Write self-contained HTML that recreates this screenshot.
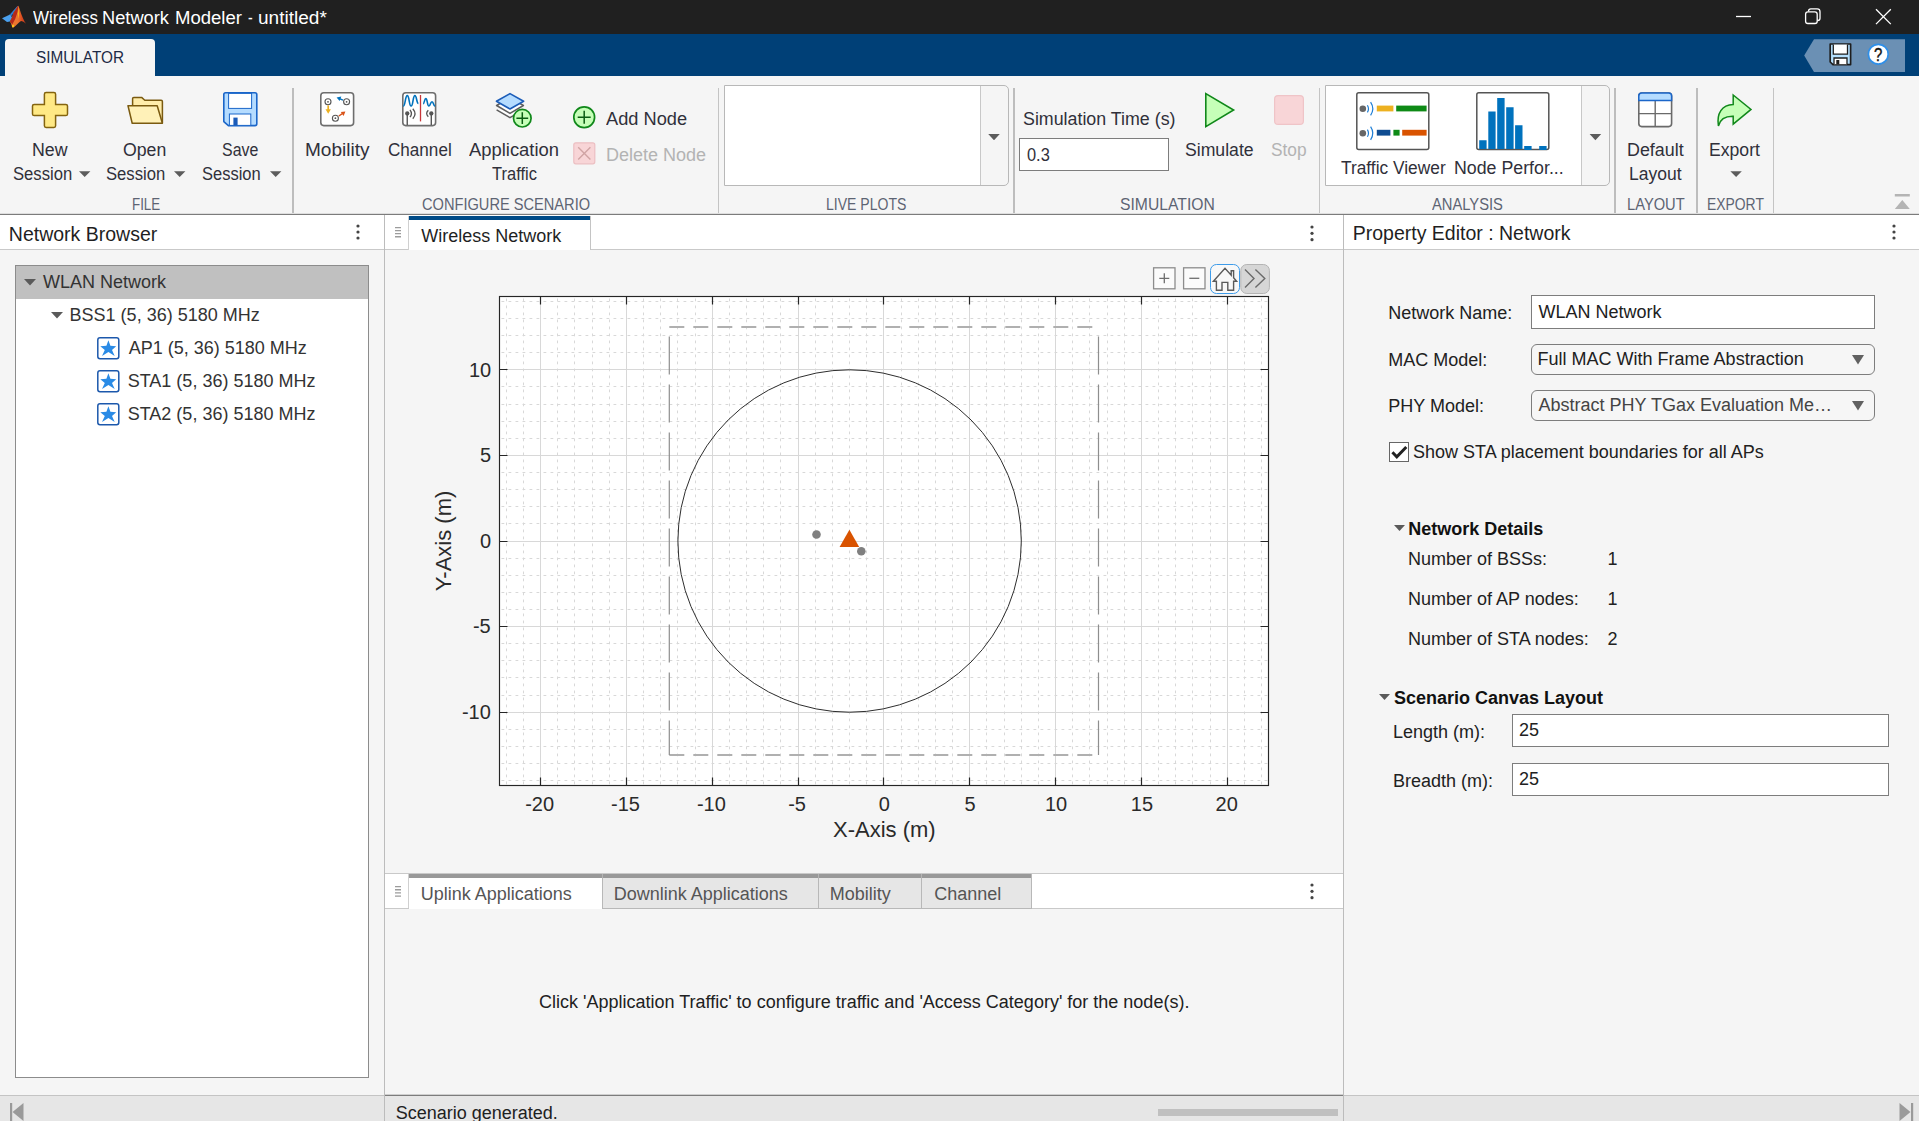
<!DOCTYPE html>
<html lang="en">
<head>
<meta charset="utf-8">
<title>Wireless Network Modeler - untitled*</title>
<style>
html,body{margin:0;padding:0;}
body{width:1919px;height:1121px;overflow:hidden;background:#f5f5f5;font-family:"Liberation Sans",sans-serif;position:relative;color:#212121;}
.a{position:absolute;}
.t{position:absolute;white-space:nowrap;line-height:normal;}
.ts{color:#1f1f2e;}
.sec{color:#5f6675;}
.dis{color:#b4b4b4;}
svg{position:absolute;overflow:visible;}
</style>
</head>
<body>
<!-- title bar -->
<div class="a" style="left:0;top:0;width:1919px;height:34px;background:#202020;"></div>
<!-- blue band -->
<div class="a" style="left:0;top:34px;width:1919px;height:42px;background:#004077;"></div>
<!-- simulator tab -->
<div class="a" style="left:5px;top:39px;width:150px;height:37px;background:#f5f5f5;border-radius:4px 4px 0 0;"></div>
<!-- toolstrip bottom border -->
<div class="a" style="left:0;top:213px;width:1919px;height:1px;background:#dedede;"></div><div class="a" style="left:0;top:214px;width:1919px;height:1px;background:#7c7c7c;"></div>
<!-- section separators -->
<div class="a" style="left:292px;top:88px;width:2px;height:125px;background:#bdbdbd;"></div>
<div class="a" style="left:718px;top:88px;width:1px;height:125px;background:#c4c4c4;"></div>
<div class="a" style="left:1013px;top:88px;width:2px;height:125px;background:#bdbdbd;"></div>
<div class="a" style="left:1319px;top:88px;width:1px;height:125px;background:#c4c4c4;"></div>
<div class="a" style="left:1614px;top:88px;width:2px;height:125px;background:#bdbdbd;"></div>
<div class="a" style="left:1696px;top:88px;width:2px;height:125px;background:#bdbdbd;"></div>
<div class="a" style="left:1773px;top:88px;width:1px;height:125px;background:#c4c4c4;"></div>
<!-- galleries -->
<div class="a" style="left:724px;top:85px;width:285px;height:101px;box-sizing:border-box;border:1px solid #b8b8b8;border-radius:0 5px 5px 0;background:#f5f5f5;"></div>
<div class="a" style="left:725px;top:86px;width:255px;height:99px;background:#fff;border-right:1px solid #c8c8c8;"></div>
<div class="a" style="left:1325px;top:85px;width:285px;height:101px;box-sizing:border-box;border:1px solid #b8b8b8;border-radius:0 5px 5px 0;background:#f5f5f5;"></div>
<div class="a" style="left:1326px;top:86px;width:255px;height:99px;background:#fff;border-right:1px solid #c8c8c8;"></div>
<!-- sim time input -->
<div class="a" style="left:1019px;top:138px;width:150px;height:33px;box-sizing:border-box;border:1px solid #7d7d7d;background:#fff;"></div>
<!-- panel headers (white) -->
<div class="a" style="left:0;top:215px;width:384px;height:34px;background:#fff;border-bottom:1px solid #c9c9c9;"></div>
<div class="a" style="left:385px;top:215px;width:958px;height:34px;background:#fff;border-bottom:1px solid #c9c9c9;"></div>
<div class="a" style="left:1344px;top:215px;width:575px;height:34px;background:#fff;border-bottom:1px solid #c9c9c9;"></div>
<!-- vertical separators -->
<div class="a" style="left:384px;top:215px;width:1px;height:906px;background:#bcbcbc;"></div>
<div class="a" style="left:1343px;top:215px;width:1px;height:906px;background:#bcbcbc;"></div>
<!-- wireless network tab -->
<div class="a" style="left:408px;top:216px;width:183px;height:34px;box-sizing:border-box;background:#fff;border-left:1px solid #d0d0d0;border-right:1px solid #c4c4c4;"></div>
<div class="a" style="left:409px;top:216px;width:181px;height:4px;background:#004b87;"></div>
<!-- grips -->
<svg style="left:395px;top:227px" width="7" height="12"><path d="M0 0H6V1.3H0ZM0 3H6V4.3H0ZM0 6H6V7.3H0ZM0 9.1H6V10.400H0Z" fill="#9c9c9c"/></svg>
<!-- kebabs -->
<svg style="left:355px;top:223px" width="6" height="18"><circle cx="3" cy="3" r="1.6" fill="#444"/><circle cx="3" cy="9" r="1.6" fill="#444"/><circle cx="3" cy="15" r="1.6" fill="#444"/></svg>
<svg style="left:1309px;top:224px" width="6" height="18"><circle cx="3" cy="3" r="1.6" fill="#444"/><circle cx="3" cy="9.3" r="1.6" fill="#444"/><circle cx="3" cy="15.7" r="1.6" fill="#444"/></svg>
<svg style="left:1891px;top:223px" width="6" height="18"><circle cx="3" cy="3" r="1.6" fill="#444"/><circle cx="3" cy="9" r="1.6" fill="#444"/><circle cx="3" cy="15" r="1.6" fill="#444"/></svg>
<!-- tree box -->
<div class="a" style="left:15px;top:265px;width:354px;height:813px;box-sizing:border-box;border:1px solid #8c8c8c;background:#fff;"></div>
<div class="a" style="left:16px;top:266px;width:352px;height:33px;background:#c0c0c0;"></div>
<svg style="left:24px;top:279px" width="12" height="7"><path d="M0 0H12L6 6.5Z" fill="#5a5a5a"/></svg>
<svg style="left:51px;top:312px" width="12" height="7"><path d="M0 0H12L6 6.5Z" fill="#5a5a5a"/></svg>
<!-- lower tab bar -->
<div class="a" style="left:385px;top:873px;width:958px;height:1px;background:#c9c9c9;"></div>
<div class="a" style="left:385px;top:874px;width:958px;height:34px;background:#fff;border-bottom:1px solid #c9c9c9;"></div>
<div class="a" style="left:408px;top:874px;width:1px;height:34px;background:#d0d0d0;"></div>
<div class="a" style="left:409px;top:874px;width:193px;height:35px;background:#fff;"></div>
<div class="a" style="left:602px;top:874px;width:430px;height:35px;box-sizing:border-box;background:#e6e6e6;border-bottom:1px solid #b8b8b8;border-right:1px solid #b8b8b8;"></div>
<div class="a" style="left:602px;top:874px;width:1px;height:34px;background:#b8b8b8;"></div>
<div class="a" style="left:818px;top:874px;width:1px;height:34px;background:#b8b8b8;"></div>
<div class="a" style="left:921px;top:874px;width:1px;height:34px;background:#b8b8b8;"></div>
<div class="a" style="left:409px;top:874px;width:622px;height:4px;background:#999;"></div>
<div class="a" style="left:602px;top:874px;width:1px;height:4px;background:#b4b4b4;"></div><div class="a" style="left:818px;top:874px;width:1px;height:4px;background:#b4b4b4;"></div><div class="a" style="left:921px;top:874px;width:1px;height:4px;background:#b4b4b4;"></div>
<svg style="left:395px;top:886px" width="7" height="12"><path d="M0 0H6V1.3H0ZM0 3.1H6V4.400H0ZM0 6.3H6V7.600H0ZM0 9.5H6V10.800H0Z" fill="#9c9c9c"/></svg>
<svg style="left:1309px;top:882px" width="6" height="18"><circle cx="3" cy="3" r="1.6" fill="#444"/><circle cx="3" cy="9.3" r="1.6" fill="#444"/><circle cx="3" cy="15.7" r="1.6" fill="#444"/></svg>
<!-- status bar -->
<div class="a" style="left:0;top:1095px;width:1919px;height:26px;background:#e6e6e6;"></div>
<div class="a" style="left:0;top:1095px;width:384px;height:1px;background:#c4c4c4;"></div>
<div class="a" style="left:385px;top:1094px;width:958px;height:1px;background:#cfcfcf;"></div><div class="a" style="left:385px;top:1095px;width:958px;height:1px;background:#7c7c7c;"></div>
<div class="a" style="left:1344px;top:1095px;width:575px;height:1px;background:#c4c4c4;"></div>
<div class="a" style="left:384px;top:1095px;width:1px;height:26px;background:#bcbcbc;"></div>
<div class="a" style="left:1343px;top:1095px;width:1px;height:26px;background:#bcbcbc;"></div>
<div class="a" style="left:1158px;top:1109px;width:180px;height:7px;background:#c0c0c0;"></div>
<svg style="left:10px;top:1103px" width="14" height="18"><rect x="0" y="0" width="2.2" height="18" fill="#9a9a9a"/><path d="M13.5 0V18L2.5 9Z" fill="#9a9a9a"/></svg>
<svg style="left:1899px;top:1103px" width="15" height="18"><rect x="12" y="0" width="2.2" height="18" fill="#9a9a9a"/><path d="M0.5 0V18L11.5 9Z" fill="#9a9a9a"/></svg>
<!-- property editor widgets -->
<div class="a" style="left:1531px;top:295px;width:344px;height:34px;box-sizing:border-box;border:1px solid #7d7d7d;background:#fff;"></div>
<div class="a" style="left:1531px;top:344px;width:344px;height:31px;box-sizing:border-box;border:1px solid #7d7d7d;border-radius:6px;background:#f6f6f6;"></div>
<div class="a" style="left:1531px;top:390px;width:344px;height:31px;box-sizing:border-box;border:1px solid #7d7d7d;border-radius:6px;background:#f6f6f6;"></div>
<svg style="left:1852px;top:355px" width="12" height="10"><path d="M0 0H12L6 9.5Z" fill="#616161"/></svg>
<svg style="left:1852px;top:401px" width="12" height="10"><path d="M0 0H12L6 9.5Z" fill="#616161"/></svg>
<div class="a" style="left:1389px;top:442px;width:20px;height:20px;box-sizing:border-box;border:1px solid #666;background:#fff;"></div>
<svg style="left:1389px;top:442px" width="20" height="20"><path d="M3.400 10.200L7.800 14.800L17.300 4.900" stroke="#222" stroke-width="2.900" fill="none"/></svg>
<svg style="left:1394px;top:525px" width="12" height="7"><path d="M0 0H11L5.5 6Z" fill="#5a5a5a"/></svg>
<svg style="left:1379px;top:694px" width="12" height="7"><path d="M0 0H11L5.5 6Z" fill="#5a5a5a"/></svg>
<div class="a" style="left:1512px;top:714px;width:377px;height:33px;box-sizing:border-box;border:1px solid #7d7d7d;background:#fff;"></div>
<div class="a" style="left:1512px;top:763px;width:377px;height:33px;box-sizing:border-box;border:1px solid #7d7d7d;background:#fff;"></div>
<svg style="left:0;top:0" width="1919" height="1121" viewBox="0 0 1919 1121">
<rect x="499.5" y="296.5" width="769.0" height="489.0" fill="#fff"/>
<path d="M506.5 296.5V785.5M523.5 296.5V785.5M557.5 296.5V785.5M574.5 296.5V785.5M592.5 296.5V785.5M609.5 296.5V785.5M643.5 296.5V785.5M660.5 296.5V785.5M677.5 296.5V785.5M695.5 296.5V785.5M729.5 296.5V785.5M746.5 296.5V785.5M763.5 296.5V785.5M780.5 296.5V785.5M815.5 296.5V785.5M832.5 296.5V785.5M849.5 296.5V785.5M866.5 296.5V785.5M901.5 296.5V785.5M918.5 296.5V785.5M935.5 296.5V785.5M952.5 296.5V785.5M986.5 296.5V785.5M1004.5 296.5V785.5M1021.5 296.5V785.5M1038.5 296.5V785.5M1072.5 296.5V785.5M1089.5 296.5V785.5M1107.5 296.5V785.5M1124.5 296.5V785.5M1158.5 296.5V785.5M1175.5 296.5V785.5M1192.5 296.5V785.5M1210.5 296.5V785.5M1244.5 296.5V785.5M1261.5 296.5V785.5" stroke="#d8d8d8" stroke-width="1" stroke-dasharray="2.8 4.2" stroke-dashoffset="-2" fill="none"/>
<path d="M499.5 780.5H1268.5M499.5 763.5H1268.5M499.5 746.5H1268.5M499.5 729.5H1268.5M499.5 695.5H1268.5M499.5 677.5H1268.5M499.5 660.5H1268.5M499.5 643.5H1268.5M499.5 609.5H1268.5M499.5 592.5H1268.5M499.5 575.5H1268.5M499.5 558.5H1268.5M499.5 523.5H1268.5M499.5 506.5H1268.5M499.5 489.5H1268.5M499.5 472.5H1268.5M499.5 438.5H1268.5M499.5 421.5H1268.5M499.5 404.5H1268.5M499.5 386.5H1268.5M499.5 352.5H1268.5M499.5 335.5H1268.5M499.5 318.5H1268.5M499.5 301.5H1268.5" stroke="#d8d8d8" stroke-width="1" stroke-dasharray="2.8 4.2" stroke-dashoffset="-2" fill="none"/>
<path d="M540.5 296.5V785.5M626.5 296.5V785.5M712.5 296.5V785.5M798.5 296.5V785.5M883.5 296.5V785.5M969.5 296.5V785.5M1055.5 296.5V785.5M1141.5 296.5V785.5M1227.5 296.5V785.5M499.5 712.5H1268.5M499.5 626.5H1268.5M499.5 541.5H1268.5M499.5 455.5H1268.5M499.5 369.5H1268.5" stroke="#d8d8d8" stroke-width="1" fill="none"/>
<path d="M669.3 327.0H1098.5M669.3 755.0H1098.5" stroke="#b0b0b0" stroke-width="1.8" stroke-dasharray="15 9" fill="none"/>
<path d="M669.3 336.4V755.0M1098.5 336.4V755.0" stroke="#8e8e8e" stroke-width="1.2" stroke-dasharray="38 10" fill="none"/>
<ellipse cx="849.6" cy="541.0" rx="171.7" ry="171.2" stroke="#2e2e2e" stroke-width="1" fill="none"/>
<circle cx="816.5" cy="534.5" r="4.3" fill="#808080"/>
<circle cx="861.3" cy="551.3" r="4.3" fill="#808080"/>
<path d="M849.4 529.8L859.2 547H839.6Z" fill="#d95300"/>
<path d="M540.5 296.5v8M540.5 785.5v-8M626.5 296.5v8M626.5 785.5v-8M712.5 296.5v8M712.5 785.5v-8M798.5 296.5v8M798.5 785.5v-8M883.5 296.5v8M883.5 785.5v-8M969.5 296.5v8M969.5 785.5v-8M1055.5 296.5v8M1055.5 785.5v-8M1141.5 296.5v8M1141.5 785.5v-8M1227.5 296.5v8M1227.5 785.5v-8M499.5 712.5h8M1268.5 712.5h-8M499.5 626.5h8M1268.5 626.5h-8M499.5 541.5h8M1268.5 541.5h-8M499.5 455.5h8M1268.5 455.5h-8M499.5 369.5h8M1268.5 369.5h-8" stroke="#262626" stroke-width="1.2" fill="none"/>
<rect x="499.5" y="296.5" width="769.0" height="489.0" fill="none" stroke="#262626" stroke-width="1.15"/>
</svg>
<!-- matlab logo -->
<svg style="left:0;top:0" width="30" height="34" viewBox="0 0 30 34">
<defs><linearGradient id="lg1" x1="0" y1="0" x2="1" y2="0"><stop offset="0" stop-color="#ee7a2c"/><stop offset="0.5" stop-color="#ec7430"/><stop offset="0.75" stop-color="#d9491f"/><stop offset="1" stop-color="#c03a1c"/></linearGradient></defs>
<path d="M2 18.3L8.5 15.2L10.2 14.3L12 17.6L9.9 21.4L7 21.9Z" fill="#4aa0ee"/>
<path d="M10 14.3L17.5 5.9L17.9 6.6L13.6 12.8L11.6 16Z" fill="#2f7cd6"/>
<path d="M12.7 28C12 26 11 23.5 10 21.6L12 17.6L13.8 12.6L17.8 6.2L18.4 5.8C19.6 8 21.6 17.5 26 23.7C24 22 22.5 21 21 21C18.5 22.500 15.500 26.500 12.700 28Z" fill="url(#lg1)"/>
<path d="M17.8 6.2L18.4 5.8L17.600 12L15.200 19L12.300 24.500L10 21.600L12 17.600L13.800 12.600Z" fill="#b3281b"/>
<path d="M18.400 6.800L19.100 13.500L18.700 19L17.700 13.500Z" fill="#f7b21e"/>
<circle cx="13" cy="26" r="1.200" fill="#fbc31a"/>
</svg>
<!-- window controls -->
<svg style="left:1730px;top:0" width="189" height="34" viewBox="1730 0 189 34">
<path d="M1736 16.5H1751" stroke="#fff" stroke-width="1.3" fill="none"/>
<path d="M1808.5 11.5V11A2.3 2.3 0 0 1 1810.8 8.9H1817.2A2.8 2.8 0 0 1 1820 11.7V18.2A2.3 2.3 0 0 1 1817.7 20.5H1817.3" stroke="#fff" stroke-width="1.3" fill="none"/>
<rect x="1805.6" y="11.9" width="11.6" height="11.6" rx="2.3" stroke="#fff" stroke-width="1.3" fill="none"/>
<path d="M1876 9.3L1890.8 24.1M1890.8 9.3L1876 24.1" stroke="#fff" stroke-width="1.3" fill="none"/>
</svg>
<!-- quick access -->
<svg style="left:1800px;top:34px" width="119" height="42" viewBox="1800 34 119 42">
<path d="M1804.2 55.6L1814 39.2H1905V72H1814Z" fill="#6b90b4"/>
<path d="M1830.2 44H1850.6V64.6H1833L1830.2 62Z" fill="#b4e0ff" stroke="#1e1e1e" stroke-width="1.700" stroke-linejoin="round"/>
<rect x="1833.3" y="44.6" width="14.2" height="9.6" fill="#fff"/>
<rect x="1834" y="58" width="13" height="6.2" fill="#fff"/>
<path d="M1833.3 44.6V54.2H1847.5V44.6M1834 64V58H1847V64" stroke="#1e1e1e" stroke-width="1.300" fill="none"/>
<rect x="1836.3" y="60" width="3" height="4.4" fill="#1e1e1e"/>
<circle cx="1878.3" cy="54.2" r="9.900" fill="#fff" stroke="#2f8fe8" stroke-width="1.700"/>
</svg>
<!-- New Session -->
<svg style="left:0;top:76px" width="300" height="140" viewBox="0 76 300 140">
<path d="M44.4 94.3Q44.4 92.6 46.1 92.6H53.9Q55.6 92.6 55.6 94.3V104.4H65.8Q67.5 104.4 67.5 106.1V113.9Q67.5 115.6 65.8 115.6H55.6V125.8Q55.6 127.5 53.9 127.5H46.1Q44.4 127.5 44.4 125.8V115.6H34.2Q32.5 115.6 32.5 113.9V106.1Q32.5 104.4 34.2 104.4H44.4Z" fill="#ffe985" stroke="#84640f" stroke-width="1.5"/>
<!-- Open folder -->
<path d="M132.6 106V98.6Q132.6 97.4 133.8 97.4H141.6L144.8 100.2H161.2Q162.4 100.2 162.4 101.4V123" fill="#ffedab" stroke="#7a5a10" stroke-width="1.5" stroke-linejoin="round"/>
<path d="M128 105.8H157.2L162.4 123.2H132.2Z" fill="#fff1b8" stroke="#7a5a10" stroke-width="1.5" stroke-linejoin="round"/>
<!-- Save -->
<path d="M225.6 92.8H255Q256.8 92.8 256.8 94.6V123.8Q256.8 125.6 255 125.6H228.4L223.8 121.6V94.6Q223.8 92.8 225.6 92.8Z" fill="#b5dcff" stroke="#1b66c9" stroke-width="1.6" stroke-linejoin="round"/>
<rect x="228.6" y="93.4" width="23" height="15" fill="#fff" stroke="#1b66c9" stroke-width="1"/>
<rect x="229.4" y="114" width="21.4" height="11.4" fill="#fff" stroke="#1b66c9" stroke-width="1"/>
<rect x="233.4" y="117.6" width="4.2" height="7.8" fill="#1b5bb8"/>
<!-- dropdown arrows -->
<path d="M79 171.2H90.4L84.7 177Z M174 171.2H185.4L179.7 177Z M270 171.2H281.4L275.7 177Z" fill="#5c5c5c"/>
</svg>
<svg style="left:300px;top:76px" width="420" height="140" viewBox="300 76 420 140">
<!-- Mobility -->
<rect x="320.8" y="92.8" width="32.8" height="32.8" rx="3" fill="#fff" stroke="#6e6e6e" stroke-width="1.6"/>
<g fill="#fff" stroke="#555" stroke-width="1.1"><circle cx="328" cy="101.8" r="3"/><circle cx="346.6" cy="101.8" r="3"/><circle cx="335.4" cy="118.2" r="3"/></g>
<g fill="#555"><circle cx="328" cy="101.8" r="0.9"/><circle cx="346.6" cy="101.8" r="0.9"/><circle cx="335.4" cy="118.2" r="0.9"/></g>
<path d="M328.200 105.400V110" stroke="#edb120" stroke-width="1.700" fill="none"/><path d="M325.500 109.300H330.900L328.200 113.700Z" fill="#edb120"/>
<path d="M343 100.2L339.5 98.6" stroke="#0072bd" stroke-width="1.4" fill="none"/><path d="M336.6 97.4L341.3 96.4L339.6 100.9Z" fill="#0072bd"/>
<path d="M338.8 116L342.4 113.6" stroke="#d95319" stroke-width="1.4" fill="none"/><path d="M345.4 111.5L343.6 116L340.8 111.9Z" fill="#d95319"/>
<!-- Channel -->
<rect x="402.8" y="92.8" width="32.8" height="32.8" rx="3" fill="#fff" stroke="#6e6e6e" stroke-width="1.6"/>
<path d="M420.5 95V121.4" stroke="#c8373a" stroke-width="1.3" fill="none"/>
<path d="M403.2 106.2C405.45 106.2 405.05 95.6 407.3 95.6C409.39 95.6 409.01 106 411.1 106C413.19 106 412.81 95.6 414.9 95.6C416.82 95.6 416.47 103.4 418.4 103.4" stroke="#0072bd" stroke-width="1.600" fill="none"/>
<path d="M423.1 103.6C424.59 103.6 424.31 98.6 425.8 98.6C427.50 98.6 427.19 106 428.9 106C430.61 106 430.29 101.7 432 101.7C433.71 101.7 433.39 106.2 435.1 106.2" stroke="#0072bd" stroke-width="1.600" fill="none"/>
<circle cx="407.250" cy="113.500" r="2.150" fill="#555"/><path d="M407.250 114V125" stroke="#555" stroke-width="1.400" fill="none"/>
<path d="M410 109.800Q412.800 113.500 410 117.200M412.800 108.800Q417.200 113.800 412.800 118.800" stroke="#555" stroke-width="1.300" fill="none"/>
<circle cx="431.300" cy="113.500" r="2.150" fill="#555"/><path d="M431.300 114V125" stroke="#555" stroke-width="1.400" fill="none"/>
<path d="M428.300 110.300Q425 113.500 428.300 116.700" stroke="#555" stroke-width="1.300" fill="none"/>
<!-- Application traffic -->
<path d="M496.600 109.800L510 117.700L523.400 109.800" fill="#fff" stroke="#5e5e5e" stroke-width="1.500" stroke-linejoin="round"/>
<path d="M496.600 105.500L510 113.400L523.400 105.500L510 97.600Z" fill="#fff" stroke="#5e5e5e" stroke-width="1.500" stroke-linejoin="round"/>
<path d="M496.400 101.300L510 93.600L523.600 101.300L510 109Z" fill="#b5dcff" stroke="#1b5cb8" stroke-width="1.600" stroke-linejoin="round"/>
<circle cx="522.300" cy="118.200" r="8.800" fill="#c6ffb8" stroke="#10881a" stroke-width="1.700"/>
<path d="M516.400 118.200H528.200M522.300 112.300V124.100" stroke="#0a5d12" stroke-width="1.500" fill="none"/>
<!-- Add node -->
<circle cx="584.200" cy="117.200" r="10.400" fill="#c6ffb8" stroke="#10881a" stroke-width="1.700"/>
<path d="M577.700 117.200H590.700M584.200 110.700V123.700" stroke="#0a5d12" stroke-width="1.500" fill="none"/>
<!-- Delete node -->
<rect x="573.800" y="142.800" width="21" height="21" rx="2" fill="#f8d5d7" stroke="#ecbfc2" stroke-width="1.2"/>
<path d="M578.200 147.200L590.400 159.400M590.400 147.200L578.200 159.400" stroke="#d0a4a4" stroke-width="1.400" fill="none"/>
</svg>
<svg style="left:980px;top:76px" width="939" height="140" viewBox="980 76 939 140">
<!-- gallery arrows -->
<path d="M988.200 134H999.800L994 140.200Z M1589.600 134H1601.200L1595.400 140.200Z" fill="#5c5c5c"/>
<!-- play -->
<path d="M1205.800 93.600V126.600L1233.600 110Z" fill="#c6ffb8" stroke="#10881a" stroke-width="1.600" stroke-linejoin="miter"/>
<!-- stop -->
<rect x="1274.600" y="95.600" width="28.800" height="28.800" rx="3.500" fill="#f8d5d7" stroke="#efc4c7" stroke-width="1.200"/>
<!-- traffic viewer -->
<rect x="1356.800" y="92.800" width="72" height="56.600" rx="2" fill="#fff" stroke="#555" stroke-width="1.500"/>
<circle cx="1362.800" cy="108.800" r="3.300" fill="#666"/><circle cx="1362.800" cy="133.200" r="3.300" fill="#666"/>
<path d="M1367.400 105.200Q1369.600 108.800 1367.400 112.400M1370.600 102.200Q1375 108.800 1370.600 115.400M1367.400 129.600Q1369.600 133.200 1367.400 136.800M1370.600 126.600Q1375 133.200 1370.600 139.800" stroke="#1f7fd6" stroke-width="1.200" fill="none"/>
<rect x="1376.800" y="105.600" width="16.600" height="5.800" fill="#edb120"/>
<rect x="1396.200" y="105.600" width="30.400" height="5.800" fill="#0e8a16"/>
<rect x="1376.800" y="129.800" width="13.600" height="5.800" fill="#0f4c91"/>
<rect x="1393.400" y="129.800" width="6.200" height="5.800" fill="#0e8a16"/>
<rect x="1402.200" y="129.800" width="24.400" height="5.800" fill="#d95300"/>
<!-- node perf -->
<rect x="1476.800" y="92.800" width="72" height="56.800" rx="2" fill="#fff" stroke="#555" stroke-width="1.500"/>
<path d="M1479.200 149V140.200H1486.600V149Z M1488.300 149V111.500H1495.600V149Z M1497.200 149V98H1504.600V149Z M1506.200 149V107.200H1513.600V149Z M1515.100 149V125.200H1522.500V149Z M1524.200 150V146H1531.600V150Z M1539.200 150V146H1546.600V150Z" fill="#0072bd"/>
<!-- default layout -->
<rect x="1638.800" y="93" width="32.800" height="33.600" rx="3" fill="#fff" stroke="#6a6a6a" stroke-width="1.600"/>
<path d="M1655.200 100.500V126.600M1638.800 113.600H1671.600" stroke="#6a6a6a" stroke-width="1.400" fill="none"/>
<path d="M1638.800 100.600V96Q1638.800 93 1641.800 93H1668.600Q1671.600 93 1671.600 96V100.600Z" fill="#b5dcff" stroke="#1b66c9" stroke-width="1.500"/>
<!-- export -->
<path d="M1733.200 95L1751 109.400L1733.200 124.200V116.200C1724.500 116 1720 119.500 1718.400 126C1716.400 113.500 1722 104.800 1733.200 104.600Z" fill="#c6ffb8" stroke="#10881a" stroke-width="1.500" stroke-linejoin="miter"/>
<path d="M1730.400 171.200H1741.800L1736.100 177Z" fill="#5c5c5c"/>
<!-- collapse -->
<path d="M1894.800 194H1909.800V196.600H1894.800Z M1894.800 209H1909.800L1902.300 200Z" fill="#b4b4b4"/>
</svg>
<!-- axes toolbar -->
<svg style="left:1150px;top:260px" width="125" height="36" viewBox="1150 260 125 36">
<rect x="1153.600" y="267.800" width="21.400" height="21" fill="#fbfbfb" stroke="#8c8c8c" stroke-width="1.300"/>
<path d="M1159.300 278.300H1169.300M1164.300 273.300V283.300" stroke="#6e6e6e" stroke-width="1.300" fill="none"/>
<rect x="1183.600" y="267.800" width="21.400" height="21" fill="#fbfbfb" stroke="#8c8c8c" stroke-width="1.300"/>
<path d="M1189.300 278.300H1199.300" stroke="#6e6e6e" stroke-width="1.300" fill="none"/>
<rect x="1210.500" y="264.500" width="29" height="29" rx="6" fill="#f8f8f8" stroke="#3d9be9" stroke-width="1"/>
<path d="M1213.400 281.200L1225 268.400L1231.200 275.200V270.800H1233.600V277.800L1236.600 281.200H1233.600V290.200H1227.800V282.400H1222V290.200H1216.400V281.200Z" fill="none" stroke="#5a5a5a" stroke-width="1.400" stroke-linejoin="miter"/>
<rect x="1240.800" y="264.500" width="28.600" height="29" rx="6" fill="#d6d6d6" stroke="#b4b4b4" stroke-width="1"/>
<path d="M1245 269.600L1254 278.600L1245 287.600M1255.400 269.600L1264.800 278.600L1255.400 287.600" fill="none" stroke="#6a6a6a" stroke-width="1.400"/>
</svg>
<!-- tree icons -->
<svg style="left:95px;top:335px" width="28" height="95" viewBox="95 335 28 95">
<g fill="#fff" stroke="#1c58ac" stroke-width="1.500"><rect x="97.800" y="337.700" width="21" height="21" rx="2.200"/><rect x="97.800" y="370.700" width="21" height="21" rx="2.200"/><rect x="97.800" y="403.700" width="21" height="21" rx="2.200"/></g>
<g fill="#2a8be6"><path d="M108.400 340.200L110.400 345.700L116.200 346.200L112 350L114.700 356L108.400 352L102 356L104.800 350L100.300 346.200L106.400 345.700Z"/><path transform="translate(0 33)" d="M108.400 340.200L110.400 345.700L116.200 346.200L112 350L114.700 356L108.400 352L102 356L104.800 350L100.300 346.200L106.400 345.700Z"/><path transform="translate(0 66)" d="M108.400 340.200L110.400 345.700L116.200 346.200L112 350L114.700 356L108.400 352L102 356L104.800 350L100.300 346.200L106.400 345.700Z"/></g>
</svg>
<div class="t" style="left:32.5px;top:7.8px;font-size:18px;color:#fff;transform:scaleX(0.9420);transform-origin:0 0;">Wireless</div>
<div class="t" style="left:102.3px;top:7.8px;font-size:18px;color:#fff;transform:scaleX(1.0138);transform-origin:0 0;">Network</div>
<div class="t" style="left:174.8px;top:7.8px;font-size:18px;color:#fff;transform:scaleX(1.0297);transform-origin:0 0;">Modeler</div>
<div class="t" style="left:247.5px;top:7.8px;font-size:18px;color:#fff;transform:scaleX(0.7833);transform-origin:0 0;">-</div>
<div class="t" style="left:258.4px;top:7.8px;font-size:18px;color:#fff;transform:scaleX(1.0578);transform-origin:0 0;">untitled*</div>
<div class="t" style="left:36.3px;top:48.5px;font-size:16px;color:#1d2a45;transform:scaleX(0.9582);transform-origin:0 0;">SIMULATOR</div>
<div class="t" style="left:31.5px;top:140.0px;font-size:17.5px;color:#30303a;transform:scaleX(1.0147);transform-origin:0 0;">New</div>
<div class="t" style="left:12.7px;top:164.0px;font-size:17.5px;color:#30303a;transform:scaleX(0.9508);transform-origin:0 0;">Session</div>
<div class="t" style="left:123.3px;top:140.0px;font-size:17.5px;color:#30303a;transform:scaleX(1.0119);transform-origin:0 0;">Open</div>
<div class="t" style="left:105.7px;top:164.0px;font-size:17.5px;color:#30303a;transform:scaleX(0.9508);transform-origin:0 0;">Session</div>
<div class="t" style="left:221.6px;top:140.0px;font-size:17.5px;color:#30303a;transform:scaleX(0.9103);transform-origin:0 0;">Save</div>
<div class="t" style="left:201.6px;top:164.0px;font-size:17.5px;color:#30303a;transform:scaleX(0.9426);transform-origin:0 0;">Session</div>
<div class="t" style="left:304.7px;top:140.0px;font-size:17.5px;color:#30303a;transform:scaleX(1.0881);transform-origin:0 0;">Mobility</div>
<div class="t" style="left:387.8px;top:140.0px;font-size:17.5px;color:#30303a;transform:scaleX(0.9769);transform-origin:0 0;">Channel</div>
<div class="t" style="left:469.0px;top:140.0px;font-size:17.5px;color:#30303a;transform:scaleX(1.0506);transform-origin:0 0;">Application</div>
<div class="t" style="left:491.7px;top:164.0px;font-size:17.5px;color:#30303a;transform:scaleX(0.9438);transform-origin:0 0;">Traffic</div>
<div class="t" style="left:606.3px;top:108.7px;font-size:17.5px;color:#30303a;transform:scaleX(1.0410);transform-origin:0 0;">Add Node</div>
<div class="t" style="left:606.0px;top:144.7px;font-size:17.5px;color:#b3b3b3;transform:scaleX(1.0292);transform-origin:0 0;">Delete Node</div>
<div class="t" style="left:1023.0px;top:108.7px;font-size:17.5px;color:#30303a;transform:scaleX(1.0182);transform-origin:0 0;">Simulation Time (s)</div>
<div class="t" style="left:1026.7px;top:144.8px;font-size:17.5px;color:#30303a;transform:scaleX(0.9375);transform-origin:0 0;">0.3</div>
<div class="t" style="left:1184.8px;top:140.0px;font-size:17.5px;color:#30303a;transform:scaleX(1.0075);transform-origin:0 0;">Simulate</div>
<div class="t" style="left:1270.7px;top:140.0px;font-size:17.5px;color:#b3b3b3;transform:scaleX(0.9886);transform-origin:0 0;">Stop</div>
<div class="t" style="left:1340.8px;top:157.8px;font-size:17.5px;color:#30303a;transform:scaleX(0.9906);transform-origin:0 0;">Traffic Viewer</div>
<div class="t" style="left:1454.3px;top:157.8px;font-size:17.5px;color:#30303a;transform:scaleX(1.0160);transform-origin:0 0;">Node Perfor...</div>
<div class="t" style="left:1627.0px;top:140.0px;font-size:17.5px;color:#30303a;transform:scaleX(1.0218);transform-origin:0 0;">Default</div>
<div class="t" style="left:1629.0px;top:164.0px;font-size:17.5px;color:#30303a;">Layout</div>
<div class="t" style="left:1708.9px;top:140.0px;font-size:17.5px;color:#30303a;transform:scaleX(1.0060);transform-origin:0 0;">Export</div>
<div class="t" style="left:131.7px;top:195.2px;font-size:16.5px;color:#5d6473;transform:scaleX(0.8088);transform-origin:0 0;">FILE</div>
<div class="t" style="left:421.7px;top:195.2px;font-size:16.5px;color:#5d6473;transform:scaleX(0.8858);transform-origin:0 0;">CONFIGURE SCENARIO</div>
<div class="t" style="left:825.8px;top:195.2px;font-size:16.5px;color:#5d6473;transform:scaleX(0.8505);transform-origin:0 0;">LIVE PLOTS</div>
<div class="t" style="left:1119.5px;top:195.2px;font-size:16.5px;color:#5d6473;transform:scaleX(0.9515);transform-origin:0 0;">SIMULATION</div>
<div class="t" style="left:1431.7px;top:195.2px;font-size:16.5px;color:#5d6473;transform:scaleX(0.8924);transform-origin:0 0;">ANALYSIS</div>
<div class="t" style="left:1626.6px;top:195.2px;font-size:16.5px;color:#5d6473;transform:scaleX(0.8906);transform-origin:0 0;">LAYOUT</div>
<div class="t" style="left:1706.6px;top:195.2px;font-size:16.5px;color:#5d6473;transform:scaleX(0.8418);transform-origin:0 0;">EXPORT</div>
<div class="t" style="left:1874.3px;top:44.9px;font-size:18px;color:#111;transform:scaleX(0.8300);transform-origin:0 0;-webkit-text-stroke:0.4px #111;">?</div>
<div class="t" style="left:8.8px;top:222.6px;font-size:19.5px;color:#1f1f1f;">Network Browser</div>
<div class="t" style="left:1352.7px;top:222.3px;font-size:19.5px;color:#1f1f1f;">Property Editor : Network</div>
<div class="t" style="left:421.3px;top:225.7px;font-size:18px;color:#1f1f1f;">Wireless Network</div>
<div class="t" style="left:43.1px;top:271.8px;font-size:18px;color:#333;">WLAN Network</div>
<div class="t" style="left:69.6px;top:304.6px;font-size:18px;color:#333;">BSS1 (5, 36) 5180 MHz</div>
<div class="t" style="left:128.7px;top:337.8px;font-size:18px;color:#333;">AP1 (5, 36) 5180 MHz</div>
<div class="t" style="left:127.7px;top:371.0px;font-size:18px;color:#333;">STA1 (5, 36) 5180 MHz</div>
<div class="t" style="left:127.7px;top:404.0px;font-size:18px;color:#333;">STA2 (5, 36) 5180 MHz</div>
<div class="t" style="left:525.2px;top:792.7px;font-size:20px;color:#2a2a2a;">-20</div>
<div class="t" style="left:611.0px;top:792.7px;font-size:20px;color:#2a2a2a;">-15</div>
<div class="t" style="left:696.9px;top:792.7px;font-size:20px;color:#2a2a2a;">-10</div>
<div class="t" style="left:788.2px;top:792.7px;font-size:20px;color:#2a2a2a;">-5</div>
<div class="t" style="left:878.7px;top:792.7px;font-size:20px;color:#2a2a2a;">0</div>
<div class="t" style="left:964.5px;top:792.7px;font-size:20px;color:#2a2a2a;">5</div>
<div class="t" style="left:1044.9px;top:792.7px;font-size:20px;color:#2a2a2a;">10</div>
<div class="t" style="left:1130.8px;top:792.7px;font-size:20px;color:#2a2a2a;">15</div>
<div class="t" style="left:1215.6px;top:792.7px;font-size:20px;color:#2a2a2a;">20</div>
<div class="t" style="left:461.9px;top:700.9px;font-size:20px;color:#2a2a2a;">-10</div>
<div class="t" style="left:472.9px;top:615.3px;font-size:20px;color:#2a2a2a;">-5</div>
<div class="t" style="left:479.9px;top:529.7px;font-size:20px;color:#2a2a2a;">0</div>
<div class="t" style="left:479.9px;top:444.1px;font-size:20px;color:#2a2a2a;">5</div>
<div class="t" style="left:468.9px;top:358.5px;font-size:20px;color:#2a2a2a;">10</div>
<div class="t" style="left:833.0px;top:817.0px;font-size:22px;color:#2a2a2a;">X-Axis (m)</div>
<div class="t" style="left:1388.3px;top:302.9px;font-size:18px;color:#212121;">Network Name:</div>
<div class="t" style="left:1538.6px;top:302.0px;font-size:18px;color:#212121;">WLAN Network</div>
<div class="t" style="left:1388.3px;top:350.2px;font-size:18px;color:#212121;">MAC Model:</div>
<div class="t" style="left:1537.6px;top:348.7px;font-size:18px;color:#212121;">Full MAC With Frame Abstraction</div>
<div class="t" style="left:1388.3px;top:396.0px;font-size:18px;color:#212121;">PHY Model:</div>
<div class="t" style="left:1538.6px;top:394.8px;font-size:18px;color:#444;">Abstract PHY TGax Evaluation Me…</div>
<div class="t" style="left:1413.0px;top:441.5px;font-size:18px;color:#212121;">Show STA placement boundaries for all APs</div>
<div class="t" style="left:1408.2px;top:519.2px;font-size:18px;color:#111;font-weight:bold;">Network Details</div>
<div class="t" style="left:1408.0px;top:549.0px;font-size:18px;color:#212121;">Number of BSSs:</div>
<div class="t" style="left:1607.4px;top:549.0px;font-size:18px;color:#212121;">1</div>
<div class="t" style="left:1408.0px;top:589.0px;font-size:18px;color:#212121;">Number of AP nodes:</div>
<div class="t" style="left:1607.4px;top:589.0px;font-size:18px;color:#212121;">1</div>
<div class="t" style="left:1408.0px;top:629.3px;font-size:18px;color:#212121;">Number of STA nodes:</div>
<div class="t" style="left:1607.5px;top:629.3px;font-size:18px;color:#212121;">2</div>
<div class="t" style="left:1394.0px;top:687.8px;font-size:18px;color:#111;font-weight:bold;">Scenario Canvas Layout</div>
<div class="t" style="left:1393.0px;top:721.8px;font-size:18px;color:#212121;">Length (m):</div>
<div class="t" style="left:1519.0px;top:720.3px;font-size:18px;color:#212121;">25</div>
<div class="t" style="left:1393.0px;top:771.0px;font-size:18px;color:#212121;">Breadth (m):</div>
<div class="t" style="left:1519.0px;top:768.8px;font-size:18px;color:#212121;">25</div>
<div class="t" style="left:420.7px;top:884.0px;font-size:18px;color:#555;">Uplink Applications</div>
<div class="t" style="left:613.7px;top:884.0px;font-size:18px;color:#555;">Downlink Applications</div>
<div class="t" style="left:829.8px;top:884.0px;font-size:18px;color:#555;">Mobility</div>
<div class="t" style="left:934.2px;top:884.0px;font-size:18px;color:#555;">Channel</div>
<div class="t" style="left:539.0px;top:992.0px;font-size:18px;color:#212121;">Click &#x27;Application Traffic&#x27; to configure traffic and &#x27;Access Category&#x27; for the node(s).</div>
<div class="t" style="left:395.7px;top:1103.3px;font-size:18px;color:#212121;">Scenario generated.</div>
<div class="t" style="left:443.8px;top:541px;font-size:22px;color:#2a2a2a;transform:translate(-50%,-50%) rotate(-90deg);">Y-Axis (m)</div>
</body>
</html>
